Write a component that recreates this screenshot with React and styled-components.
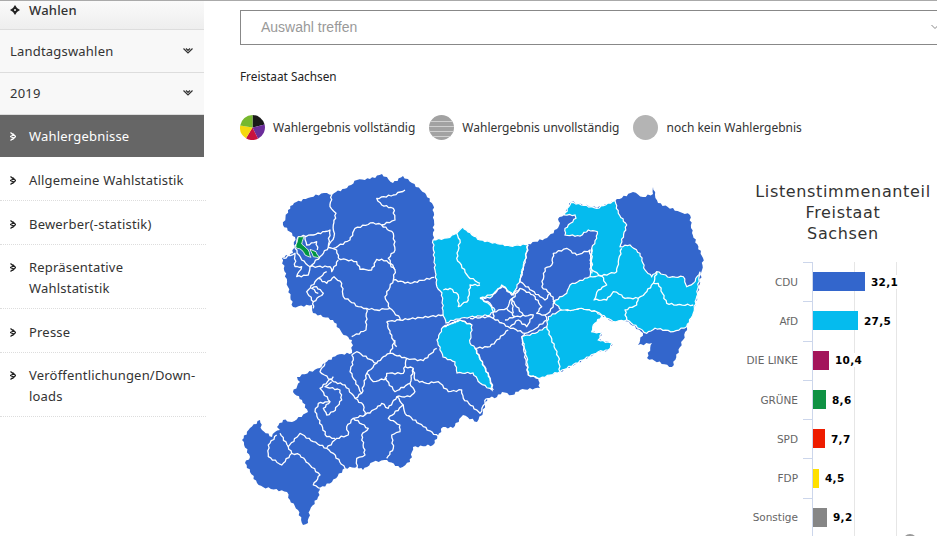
import React from 'react'
import styled, { createGlobalStyle } from 'styled-components'

const blue = '#3366cc'
const cyan = '#05bbee'

const GlobalStyle = createGlobalStyle`
    html, body {
        margin: 0;
        padding: 0;
        background: #fff;
        overflow: hidden;
    }
`

const Page = styled.div`
    display: flex;
    width: 937px;
    height: 536px;
    overflow: hidden;
    border-top: 1px solid #aaa;
    box-sizing: border-box;
    font-family: "Noto Sans", sans-serif;
    color: #333;
`

const Sidebar = styled.nav`
    flex: 0 0 204px;
    font-size: 13px;
    letter-spacing: 0.2px;
`

const TopItem = styled.div`
    display: flex;
    align-items: center;
    gap: 9px;
    height: 29px;
    padding: 0 0 11px 10px;
    box-sizing: border-box;
    font-weight: 500;
    background: linear-gradient(#fafafa, #eeeeee);
    border-bottom: 1px solid #ddd;
`

const FilterItem = styled.div`
    display: flex;
    align-items: center;
    justify-content: space-between;
    height: 42.5px;
    padding: 0 11px 0 10px;
    box-sizing: border-box;
    background: #f8f8f8;
    border-bottom: 1px solid #ddd;
`

const NavItem = styled.div`
    display: flex;
    align-items: flex-start;
    gap: 13px;
    padding: ${p => (p.$double ? '12px' : '13px')} 0 9px 10px;
    line-height: 21px;
    margin-right: -2px;
    background: #fff;
    border-bottom: 1px dotted #ddd;
`

const ActiveItem = styled.div`
    display: flex;
    align-items: center;
    gap: 13px;
    height: 42px;
    padding-left: 10px;
    box-sizing: border-box;
    background: #666;
    color: #fff;
`

const Bullet = styled.svg`
    flex: none;
    width: 6px;
    height: 9px;
    margin-top: ${p => (p.$flat ? '0' : '6px')};
`

const Main = styled.main`
    flex: 1;
    min-width: 0;
    padding: 9px 0 0 36px;
    overflow: hidden;
`

const SelectBox = styled.div`
    display: flex;
    align-items: center;
    justify-content: space-between;
    width: 697px;
    height: 35px;
    padding: 0 0 2px 20px;
    box-sizing: border-box;
    border: 1px solid #888;
    border-right: 0;
    font-family: "Liberation Sans", sans-serif;
    font-size: 14px;
    color: #999;
`

const Region = styled.div`
    margin-top: 23px;
    font-size: 11.8px;
    line-height: 17px;
    color: #222;
`

const Legend = styled.div`
    display: flex;
    align-items: center;
    margin-top: 30px;
    font-size: 12px;
    color: #333;
`

const LegendItem = styled.div`
    display: flex;
    align-items: center;
    gap: 8px;
    margin-right: 14px;
`

const LegendIcon = styled.svg`
    width: 25px;
    height: 25px;
    flex: none;
`

const Content = styled.div`
    display: flex;
    margin-top: 30px;
`

const MapSvg = styled.svg`
    flex: none;
    width: 500px;
    height: 366px;
`

const Chart = styled.section`
    flex: none;
    width: 206px;
`

const ChartTitle = styled.h2`
    margin: 11px 0 0;
    font-family: "DejaVu Sans", sans-serif;
    font-weight: 400;
    font-size: 16px;
    line-height: 21px;
    letter-spacing: 0.65px;
    text-align: center;
    color: #333;
`

const Plot = styled.div`
    margin: 18px 0 0 0;
`

const Row = styled.div`
    display: grid;
    grid-template-columns: 63px 9px 1fr;
    height: 39.3px;
`

const RowLabel = styled.div`
    align-self: center;
    text-align: right;
    padding-right: 5px;
    font-family: "DejaVu Sans", sans-serif;
    font-size: 10.5px;
    color: #666;
    white-space: nowrap;
`

const Tick = styled.div`
    height: 0;
    border-top: 1px solid #ccd6eb;
`

const Track = styled.div`
    display: flex;
    align-items: center;
    gap: 6px;
    width: 83px;
    border-left: 1px solid #ccd6eb;
    border-right: 1px solid #e6e6e6;
    background: linear-gradient(#e6e6e6, #e6e6e6) 41px 0 / 1px 100% no-repeat;
`

const Bar = styled.div`
    height: 19px;
    flex: none;
    background: ${p => p.$color};
`

const Value = styled.span`
    font-family: "DejaVu Sans", sans-serif;
    font-size: 10.5px;
    font-weight: 700;
    letter-spacing: 0.3px;
    color: #000;
    background: #fff;
    line-height: 14px;
    white-space: nowrap;
`

const ExportDot = styled.div`
    position: absolute;
    left: 903px;
    top: 534px;
    width: 14px;
    height: 14px;
    border-radius: 50%;
    border-top: 2px solid #999;
    box-sizing: border-box;
`

const results = [
    { name: 'CDU', value: '32,1', width: 52, color: blue },
    { name: 'AfD', value: '27,5', width: 45, color: '#05bbee' },
    { name: 'DIE LINKE', value: '10,4', width: 16, color: '#a3155b' },
    { name: 'GRÜNE', value: '8,6', width: 13, color: '#0f9244' },
    { name: 'SPD', value: '7,7', width: 12, color: '#ee1c00' },
    { name: 'FDP', value: '4,5', width: 6, color: '#ffe000' },
    { name: 'Sonstige', value: '9,2', width: 14, color: '#868686' },
]

// map data is noted in the coordinates of the three map crops (3x), o = origin of the crop
const A = [230, 170]
const B = [470, 170]
const C = [230, 340]

const toPage = (o, pts) => pts.map(([x, y]) => [o[0] + x / 3, o[1] + y / 3])

// small deterministic wobble so the borders look like real district borders
const rough = (pts, closed, amp = 1) => {
    const list = closed ? [...pts, pts[0]] : pts
    let d = `M${list[0][0].toFixed(1)} ${list[0][1].toFixed(1)}`
    for (let i = 1; i < list.length; i++) {
        const [x0, y0] = list[i - 1]
        const [x1, y1] = list[i]
        const len = Math.hypot(x1 - x0, y1 - y0)
        const steps = Math.max(1, Math.round(len / 2.6))
        for (let s = 1; s <= steps; s++) {
            const t = s / steps
            const j = s === steps ? 0 : Math.sin(x0 * 12.9 + y0 * 78.2 + s * 2.4) * amp
            const x = x0 + (x1 - x0) * t - ((y1 - y0) / (len || 1)) * j
            const y = y0 + (y1 - y0) * t + ((x1 - x0) / (len || 1)) * j
            d += `L${x.toFixed(1)} ${y.toFixed(1)}`
        }
    }
    return closed ? d + 'Z' : d
}

const outline = [
    [288, 210], [294, 203], [308, 198], [324, 193], [332, 195], [336, 192], [347, 188], [357, 180], [370, 179], [382, 174],
    [393, 183], [403, 176], [412, 183], [425, 193], [433, 205], [434, 220], [433, 240], [447, 238], [457, 233], [463, 227],
    [468, 232], [480, 240], [490, 242], [510, 246], [528, 244], [547, 238], [557, 229], [560, 223], [558, 219], [564, 215],
    [571, 202], [597, 208], [615, 201], [633, 192], [643, 197], [653, 194], [653, 187], [655, 195], [658, 203], [680, 212],
    [690, 215], [692, 233], [703, 258], [702, 270], [697, 297], [693, 313], [687, 327], [683, 340], [672, 367], [647, 358],
    [652, 343], [638, 345], [643, 333], [624, 319], [613, 322], [602, 315], [593, 323], [592, 332], [602, 333], [598, 340],
    [613, 343], [608, 350], [598, 352], [560, 372], [538, 378], [540, 388], [520, 390], [512, 395], [502, 392], [497, 397],
    [487, 398], [483, 412], [477, 422], [463, 415], [453, 428], [443, 427], [433, 445], [413, 447], [410, 462], [400, 468],
    [387, 460], [373, 462], [363, 470], [357, 467], [345, 468], [332, 482], [320, 488], [318, 497], [310, 510], [308, 523],
    [303, 525], [298, 510], [290, 500], [287, 492], [263, 487], [257, 483], [245, 463], [250, 457], [242, 440], [250, 428],
    [260, 420], [262, 430], [272, 437], [275, 432], [280, 430], [277, 427], [283, 420], [292, 422], [308, 412], [302, 400],
    [293, 392], [300, 382], [297, 377], [320, 368], [325, 363], [337, 355], [352, 353], [352, 340], [342, 333], [333, 320],
    [313, 313], [312, 305], [293, 307], [288, 287], [282, 258], [293, 253], [295, 237], [283, 225],
]

const cyanWest = [
    [433, 240], [447, 238], [457, 233], [463, 227], [468, 232], [480, 240], [490, 242], [510, 246], [528, 244], [525, 260],
    [520, 280], [513, 295], [503, 286], [497, 290], [490, 298], [480, 298], [490, 305], [495, 310], [490, 315], [470, 317],
    [456, 319], [446, 323], [443, 313], [442, 293], [437, 287], [435, 270],
]
const cyanLower = [
    [437, 340], [443, 327], [460, 320], [472, 325], [470, 343], [475, 348], [490, 378], [492, 390], [480, 383], [473, 373],
    [457, 373], [455, 362], [443, 357],
]
const cyanSouth = toPage(B, [
    [155, 500], [195, 490], [230, 470], [235, 440], [275, 420], [310, 420], [330, 415], [380, 425], [395, 440], [370, 465],
    [365, 485], [395, 490], [385, 510], [428, 520], [415, 540], [385, 545], [270, 605], [210, 625], [175, 615], [170, 560],
])
const cyanEast = toPage(B, [
    [303, 97], [380, 115], [435, 92], [445, 130], [470, 165], [450, 230], [480, 225], [510, 250], [525, 300], [545, 320],
    [560, 305], [600, 322], [640, 320], [650, 350], [670, 340], [690, 305], [680, 380], [670, 430], [650, 470], [610, 485],
    [555, 475], [530, 490], [470, 450], [430, 455], [395, 435], [380, 425], [335, 415], [310, 420], [275, 420], [250, 395],
    [290, 370], [300, 345], [360, 320], [365, 235], [380, 205], [382, 185], [355, 180], [330, 198], [285, 195], [285, 175],
    [318, 145], [315, 135], [283, 135],
])

const borders = [
    ...[
        [[305, 75], [300, 110], [318, 130], [310, 165], [312, 200], [295, 230]],
        [[525, 60], [490, 75], [440, 85], [455, 105], [490, 115], [495, 150], [455, 165], [430, 158], [375, 175], [360, 210], [310, 235]],
        [[455, 165], [490, 190], [495, 240], [475, 265], [495, 300], [490, 330]],
        [[325, 265], [380, 275], [390, 298], [425, 300], [440, 268], [470, 272], [495, 300]],
        [[490, 330], [540, 340], [612, 322]],
        [[490, 330], [465, 380], [480, 415], [510, 445], [510, 450], [470, 455]],
        [[510, 450], [640, 435]],
        [[480, 415], [440, 420], [410, 415], [385, 410], [340, 380], [335, 340], [312, 320], [290, 340], [265, 325], [290, 305]],
        [[410, 415], [408, 480], [365, 500]],
        [[470, 455], [480, 490], [500, 530]],
        [[325, 265], [320, 240], [295, 232], [270, 260], [240, 290], [300, 290], [305, 305], [325, 270]],
        [[195, 235], [205, 200], [250, 195], [300, 180], [295, 230]],
        [[225, 200], [230, 225], [260, 215], [262, 240]],
        [[160, 265], [195, 250], [195, 290], [215, 290], [200, 320], [235, 315], [240, 290]],
        [[195, 235], [215, 270], [240, 290]],
        [[265, 325], [230, 365], [250, 395], [280, 370], [260, 350], [245, 355], [265, 370]],
        [[250, 395], [250, 415]],
        [[680, 190], [690, 210], [680, 265], [715, 320], [750, 340]],
        [[640, 360], [660, 355], [685, 375], [685, 410], [715, 390], [720, 345], [750, 345]],
        [[640, 470], [690, 450], [725, 465]],
    ].map(l => toPage(A, l)),
    ...[
        [[365, 235], [365, 300], [395, 318], [440, 305], [445, 275], [455, 235]],
        [[395, 318], [410, 345], [385, 360], [372, 390], [410, 390], [430, 365], [455, 375], [465, 385], [505, 385], [525, 370], [550, 340], [560, 305]],
        [[550, 340], [565, 340], [590, 400], [620, 405], [670, 405]],
        [[505, 385], [500, 405], [465, 420], [470, 450]],
        [[360, 320], [395, 318]],
        [[215, 350], [225, 295], [245, 285], [250, 250], [290, 235], [320, 255], [360, 240], [365, 310]],
        [[215, 350], [240, 370], [225, 390], [210, 380], [150, 335], [165, 270], [175, 225]],
        [[240, 370], [255, 395], [240, 425], [225, 435]],
        [[30, 385], [75, 370], [95, 345], [125, 375], [150, 355], [190, 375], [215, 410], [200, 430], [225, 435], [230, 450], [190, 480], [165, 490], [115, 470], [70, 445], [70, 425], [110, 415], [125, 385]],
        [[30, 385], [60, 400], [70, 425]],
        [[110, 415], [135, 440], [105, 450]],
        [[135, 440], [190, 435], [170, 470], [145, 450], [120, 470]],
        [[125, 385], [130, 430]],
        [[150, 355], [125, 390], [160, 435]],
        [[0, 445], [60, 440], [70, 445]],
        [[115, 480], [60, 530], [15, 535], [60, 625], [70, 660]],
        [[155, 500], [175, 615], [205, 625]],
        [[230, 470], [265, 560], [270, 605]],
        [[165, 490], [155, 500]],
    ].map(l => toPage(B, l)),
    ...[
        [[495, 0], [480, 40], [530, 55], [520, 100], [470, 100], [465, 115], [495, 155], [540, 130], [550, 85], [525, 80]],
        [[440, 70], [460, 50], [480, 40]],
        [[365, 45], [370, 60], [360, 95], [395, 160], [410, 100], [440, 70], [380, 35], [365, 45]],
        [[410, 100], [430, 125], [470, 115]],
        [[620, 25], [580, 62], [530, 55]],
        [[550, 85], [555, 120], [590, 130], [625, 125], [655, 155], [695, 150], [700, 175], [750, 220], [770, 175]],
        [[285, 70], [270, 95], [310, 125], [345, 135], [375, 175], [400, 195], [405, 225]],
        [[310, 110], [270, 145], [300, 185], [265, 190], [255, 215], [290, 290], [315, 295]],
        [[305, 125], [285, 140], [330, 150], [335, 180], [310, 215], [290, 225], [280, 205], [300, 185]],
        [[395, 160], [375, 175]],
        [[405, 225], [440, 205], [455, 190], [475, 205], [500, 170], [540, 170], [555, 155], [540, 130]],
        [[500, 170], [520, 195], [525, 220], [580, 260], [625, 290], [620, 315]],
        [[520, 195], [475, 235], [510, 255], [510, 275], [485, 285], [490, 325], [470, 355]],
        [[405, 225], [370, 235], [350, 260], [355, 285], [320, 295], [290, 325], [310, 340], [345, 385]],
        [[370, 235], [415, 265], [395, 285], [405, 345], [380, 355], [380, 385]],
        [[140, 285], [115, 315], [115, 350], [155, 375], [185, 340], [175, 320], [210, 280], [250, 305], [290, 325]],
        [[150, 280], [175, 320]],
        [[185, 340], [210, 345], [235, 370], [270, 405], [250, 435], [275, 445]],
    ].map(l => toPage(C, l)),
]

const greens = [
    toPage(A, [[205, 200], [222, 200], [215, 222], [235, 240], [243, 262], [225, 255], [215, 240], [197, 232]]),
    toPage(A, [[240, 238], [258, 245], [268, 265], [250, 260]]),
]

const SaxonyMap = () => (
    <MapSvg viewBox="240 170 500 366">
        <path d={rough(outline, true)} fill={blue} />
        {[cyanWest, cyanLower, cyanSouth, cyanEast].map((shape, i) => (
            <path key={i} d={rough(shape, true, 0.7)} fill={cyan} stroke="#fff" strokeWidth="1.2" />
        ))}
        {borders.map((line, i) => (
            <path key={i} d={rough(line, false, 0.8)} fill="none" stroke="#fff" strokeWidth="1.3" strokeLinejoin="round" />
        ))}
        {greens.map((shape, i) => (
            <path key={i} d={rough(shape, true, 0.3)} fill="#009640" stroke="#fff" strokeWidth="0.8" />
        ))}
    </MapSvg>
)

const NavBullet = ({ color, flat }) => (
    <Bullet viewBox="0 0 6 9" $flat={flat}>
        <path d="M0.5 0.5 L3.5 3 L0.5 4.5 L3.5 6 L0.5 8.5 M2.5 1.5 L5.5 4.5 L2.5 7.5" fill="none" stroke={color} strokeWidth="1.3" />
    </Bullet>
)

const DownChevrons = () => (
    <svg width="10" height="6" viewBox="0 0 10 6">
        <path d="M0.5 0.5 L5 5 L9.5 0.5 M3 0.5 L5 2.5 L7 0.5" fill="none" stroke="#333" strokeWidth="1.2" />
    </svg>
)

const PieIcon = () => (
    <LegendIcon viewBox="0 0 25 25">
        <path d="M12.5 12.5 L12.5 0 A12.5 12.5 0 0 1 24.6 9.5 Z" fill="#1a1a1a" />
        <path d="M12.5 12.5 L24.6 9.5 A12.5 12.5 0 0 1 18 23.7 Z" fill="#6b2d9a" />
        <path d="M12.5 12.5 L18 23.7 A12.5 12.5 0 0 1 6 23.2 Z" fill="#c8123f" />
        <path d="M12.5 12.5 L6 23.2 A12.5 12.5 0 0 1 0.2 10.5 Z" fill="#f5d90f" />
        <path d="M12.5 12.5 L0.2 10.5 A12.5 12.5 0 0 1 12.5 0 Z" fill="#77b82e" />
    </LegendIcon>
)

const StripeIcon = () => (
    <LegendIcon viewBox="0 0 25 25">
        <defs>
            <clipPath id="stripe-clip">
                <circle cx="12.5" cy="12.5" r="12.5" />
            </clipPath>
        </defs>
        <circle cx="12.5" cy="12.5" r="12.5" fill="#a2a2a2" />
        <g clipPath="url(#stripe-clip)" stroke="#d0d0d0" strokeWidth="1">
            <path d="M0 6.5H25M0 11.5H25M0 16.5H25M0 21.5H25" />
        </g>
    </LegendIcon>
)

const PlainIcon = () => (
    <LegendIcon viewBox="0 0 25 25">
        <circle cx="12.5" cy="12.5" r="12.5" fill="#b4b4b4" />
    </LegendIcon>
)

const App = () => {
    return (
        <Page>
            <GlobalStyle />
            <Sidebar>
                <TopItem>
                    <svg width="10" height="10" viewBox="0 0 10 10">
                        <path d="M5 0 L7 3 L10 5 L7 7 L5 10 L3 7 L0 5 L3 3 Z" fill="#222" />
                        <circle cx="5" cy="5" r="1" fill="#fff" />
                    </svg>
                    Wahlen
                </TopItem>
                <FilterItem>Landtagswahlen <DownChevrons /></FilterItem>
                <FilterItem>2019 <DownChevrons /></FilterItem>
                <ActiveItem><NavBullet color="#fff" flat /><span>Wahlergebnisse</span></ActiveItem>
                <NavItem><NavBullet color="#222" /><span>Allgemeine Wahlstatistik</span></NavItem>
                <NavItem><NavBullet color="#222" /><span>Bewerber(-statistik)</span></NavItem>
                <NavItem $double><NavBullet color="#222" /><span>Repräsentative<br />Wahlstatistik</span></NavItem>
                <NavItem><NavBullet color="#222" /><span>Presse</span></NavItem>
                <NavItem $double><NavBullet color="#222" /><span>Veröffentlichungen/Down-<br />loads</span></NavItem>
            </Sidebar>
            <Main>
                <SelectBox>
                    Auswahl treffen
                    <svg width="6" height="6" viewBox="0 0 6 6">
                        <path d="M0.5 1 L4 4.5 L7 1.5" fill="none" stroke="#888" strokeWidth="1" />
                    </svg>
                </SelectBox>
                <Region>Freistaat Sachsen</Region>
                <Legend>
                    <LegendItem><PieIcon />Wahlergebnis vollständig</LegendItem>
                    <LegendItem><StripeIcon />Wahlergebnis unvollständig</LegendItem>
                    <LegendItem><PlainIcon />noch kein Wahlergebnis</LegendItem>
                </Legend>
                <Content>
                    <SaxonyMap />
                    <Chart>
                        <ChartTitle>Listenstimmenanteil<br />Freistaat<br />Sachsen</ChartTitle>
                        <Plot>
                            {results.map(r => (
                                <Row key={r.name}>
                                    <RowLabel>{r.name}</RowLabel>
                                    <Tick />
                                    <Track>
                                        <Bar $color={r.color} style={{ width: r.width }} />
                                        <Value>{r.value}</Value>
                                    </Track>
                                </Row>
                            ))}
                        </Plot>
                    </Chart>
                </Content>
            </Main>
            <ExportDot />
        </Page>
    )
}

export default App
